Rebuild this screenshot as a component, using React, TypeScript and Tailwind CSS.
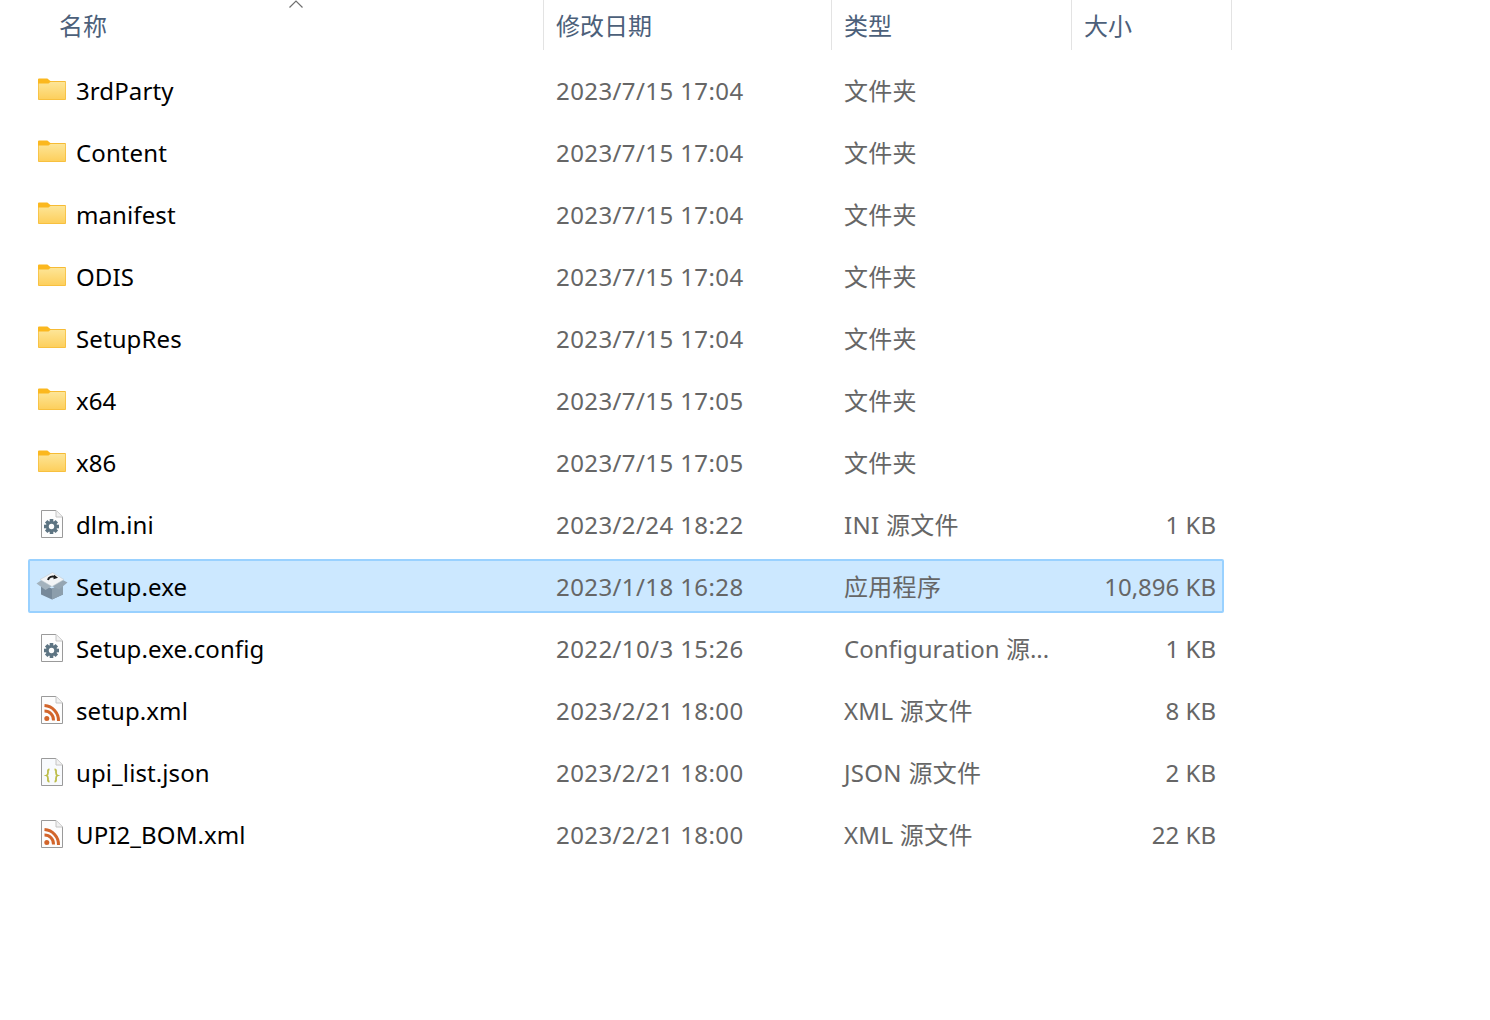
type FileKind = 'folder' | 'ini' | 'exe' | 'xml' | 'json';

interface FileRow {
  name: string;
  date: string;
  type: string;
  size?: string;
  kind: FileKind;
  selected?: boolean;
}

const rows: FileRow[] = [
  { name: '3rdParty', date: '2023/7/15 17:04', type: '文件夹', kind: 'folder' },
  { name: 'Content', date: '2023/7/15 17:04', type: '文件夹', kind: 'folder' },
  { name: 'manifest', date: '2023/7/15 17:04', type: '文件夹', kind: 'folder' },
  { name: 'ODIS', date: '2023/7/15 17:04', type: '文件夹', kind: 'folder' },
  { name: 'SetupRes', date: '2023/7/15 17:04', type: '文件夹', kind: 'folder' },
  { name: 'x64', date: '2023/7/15 17:05', type: '文件夹', kind: 'folder' },
  { name: 'x86', date: '2023/7/15 17:05', type: '文件夹', kind: 'folder' },
  { name: 'dlm.ini', date: '2023/2/24 18:22', type: 'INI 源文件', size: '1 KB', kind: 'ini' },
  { name: 'Setup.exe', date: '2023/1/18 16:28', type: '应用程序', size: '10,896 KB', kind: 'exe', selected: true },
  { name: 'Setup.exe.config', date: '2022/10/3 15:26', type: 'Configuration 源...', size: '1 KB', kind: 'ini' },
  { name: 'setup.xml', date: '2023/2/21 18:00', type: 'XML 源文件', size: '8 KB', kind: 'xml' },
  { name: 'upi_list.json', date: '2023/2/21 18:00', type: 'JSON 源文件', size: '2 KB', kind: 'json' },
  { name: 'UPI2_BOM.xml', date: '2023/2/21 18:00', type: 'XML 源文件', size: '22 KB', kind: 'xml' },
];

const FolderIcon = () => (
  <svg width="28" height="24" viewBox="0 1 28 24">
    <defs>
      <linearGradient id="folderFill" x1="0" y1="0" x2="0" y2="1">
        <stop offset="0" stopColor="#fde597" />
        <stop offset="1" stopColor="#fdcf5c" />
      </linearGradient>
    </defs>
    <rect x="0" y="4" width="28" height="19" rx="1" fill="#f6bb35" />
    <rect x="0.700" y="5" width="26.600" height="17.300" rx="0.500" fill="url(#folderFill)" />
    <path d="M0 6.500V2.500a1 1 0 0 1 1-1h7.500c1 0 1.500.4 2 .9L13 4.500 10.500 6.500Z" fill="#fbb81f" />
  </svg>
);

const PageIcon = ({ tint = '#fdfdfd', children }: { tint?: string; children: React.ReactNode }) => (
  <svg width="22" height="28" viewBox="0 0 22 28">
    <path d="M0.500 0.500H15L21.500 7V27.500H0.500Z" fill={tint} stroke="#9a9a9a" />
    <path d="M15 0.500V7H21.500" fill="#f1f1f1" stroke="#c4c4c4" />
    {children}
  </svg>
);

const GearGlyph = () => (
  <g transform="translate(10.500 16.500)">
    {[0, 45, 90, 135].map((r) => (
      <rect key={r} x="-1.800" y="-7.500" width="3.600" height="15" fill="#5d7482" transform={`rotate(${r})`} />
    ))}
    <circle r="5.600" fill="#5d7482" />
    <circle r="2.700" fill="#fdfdfd" />
  </g>
);

const RssGlyph = () => (
  <g fill="none" stroke="#d2652b" strokeWidth="3">
    <circle cx="5.800" cy="22.500" r="2.500" fill="#d2652b" stroke="none" />
    <path d="M3.500 15a9 9 0 0 1 9 9.500" />
    <path d="M3.500 9.500a15 15 0 0 1 14 15.500" />
  </g>
);

const JsonGlyph = () => (
  <g fill="none" stroke="#bcbc48" strokeWidth="1.800">
    <path d="M8.500 11.500c-2 0-1.500 1.500-1.500 3s0 2.500-1.500 3c1.500.5 1.500 1.500 1.500 3s-.5 3 1.500 3" />
    <path d="M13.500 11.500c2 0 1.500 1.500 1.500 3s0 2.500 1.500 3c-1.500.5-1.500 1.500-1.500 3s.5 3-1.500 3" />
  </g>
);

const BoxIcon = () => (
  <svg width="32" height="28" viewBox="0 0 32 28">
    <path d="M5 12L16 16.500L27 12V22.500L16 27.500L5 22.500Z" fill="#76899a" />
    <path d="M16 16.500V27.500L27 22.500V12Z" fill="#8c9eac" />
    <path d="M0.500 11.500L7 7L16 14L9.500 18Z" fill="#a3b2bd" />
    <path d="M31.500 10.500L25 7L16 14L23 17.500Z" fill="#95a5b2" />
    <path d="M4 7.500L16.500 0.500L28 7.500L16 14.500Z" fill="#f2f4f6" stroke="#c3ccd3" strokeWidth="0.600" />
    <path d="M12 8C12.500 5 16 3.800 19.500 5" fill="none" stroke="#1c1c1c" strokeWidth="2" />
    <path d="M18 2.800L22 5.800L17.500 7.200Z" fill="#1c1c1c" />
  </svg>
);

const RowIcon = ({ kind }: { kind: FileKind }) => {
  if (kind === 'folder') return <FolderIcon />;
  if (kind === 'exe') return <BoxIcon />;
  if (kind === 'ini')
    return (
      <PageIcon>
        <GearGlyph />
      </PageIcon>
    );
  if (kind === 'xml')
    return (
      <PageIcon>
        <RssGlyph />
      </PageIcon>
    );
  return (
    <PageIcon tint="#f8fafd">
      <JsonGlyph />
    </PageIcon>
  );
};

const headers = [
  { label: '名称', className: 'w-[544px] pl-[59px]' },
  { label: '修改日期', className: 'w-[288px] pl-3' },
  { label: '类型', className: 'w-[240px] pl-3' },
  { label: '大小', className: 'w-[160px] pl-3' },
];

export default function App() {
  return (
    <div className="min-h-[1020px] bg-white text-[24px] font-['Noto_Sans','Noto_Sans_CJK_SC',sans-serif] leading-none">
      <div className="relative flex h-[50px]">
        {headers.map((h) => (
          <div
            key={h.label}
            className={`${h.className} flex items-center border-r border-[#e3e3e3] pt-[2px] text-[#4c607a]`}
          >
            {h.label}
          </div>
        ))}
        <svg className="absolute left-[288px] top-0" width="16" height="9" viewBox="0 0 16 9">
          <path d="M1.500 7.500L8 1L14.500 7.500" fill="none" stroke="#6f6f6f" strokeWidth="1.200" />
        </svg>
      </div>
      <div className="ml-[28px] mt-[13px] flex w-[1196px] flex-col gap-2">
        {rows.map((row) => (
          <div
            key={row.name}
            className={`flex h-[54px] items-center rounded-[2px] border-2 ${
              row.selected ? 'border-[#99d1ff] bg-[#cce8ff]' : 'border-transparent'
            }`}
          >
            <div className="flex w-[526px] items-center text-black">
              <div className="mr-[2px] flex w-[44px] justify-center">
                <RowIcon kind={row.kind} />
              </div>
              <span className="pt-[2px] tracking-[0.1px]">{row.name}</span>
            </div>
            <div className="w-[288px] pt-[2px] tracking-[0.4px] text-[#666666]">{row.date}</div>
            <div
              className={`w-[240px] pt-[2px] text-[#666666] ${
                row.type.startsWith('Config') ? '' : 'tracking-[0.3px]'
              }`}
            >
              {row.type}
            </div>
            <div className="flex-1 pr-[6px] pt-[2px] text-right text-[#666666]">{row.size}</div>
          </div>
        ))}
      </div>
    </div>
  );
}
